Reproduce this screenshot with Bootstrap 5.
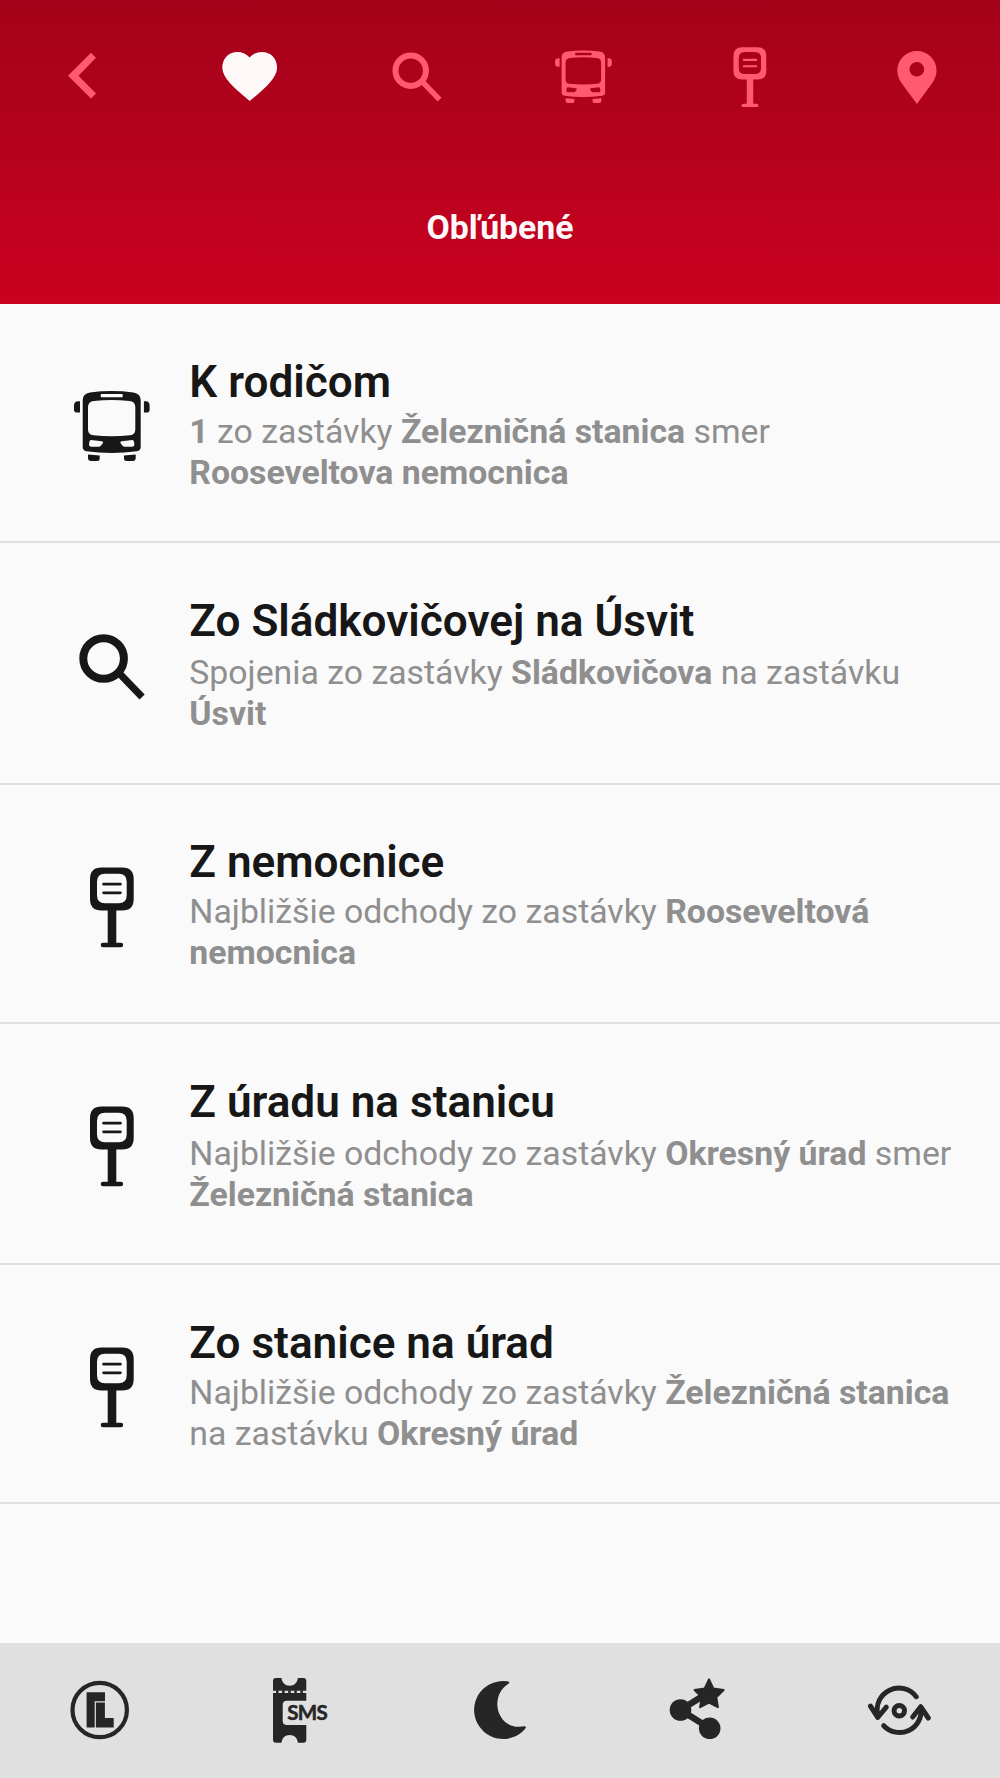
<!DOCTYPE html>
<html lang="sk">
<head>
<meta charset="utf-8">
<meta name="viewport" content="width=device-width, initial-scale=1">
<title>Obľúbené</title>
<link href="https://cdn.jsdelivr.net/npm/bootstrap@5.3.0/dist/css/bootstrap.min.css" rel="stylesheet">
<style>
body { font-family: Roboto, "Noto Sans", sans-serif; background: #fafafa; color: #171717; }
svg { display: block; fill: currentColor; }
.app-shell { height: 1778px; }
.app-top { height: 304px; background: linear-gradient(#a30219, #ca0121); color: #ff5a72; }
.top-tabs { height: 152px; }
.tab-icon { width: 72px; height: 72px; }
.tab-current { color: #fff8f9; }
.screen-title { height: 152px; padding-top: 52px; font-size: 33.8px; line-height: 48px; font-weight: 700; color: #fff8f9; }
.fav-row { height: 239.3px; border-bottom: 2px solid #e0e0e0; padding: 5px 40px 0 64.3px; gap: 29px; }
.fav-row:nth-child(even) { height: 241.3px; }
.fav-icon { width: 96px; height: 96px; flex: none; }
.fav-body { padding-bottom: 2px; white-space: nowrap; }
.fav-title { font-size: 44.1px; line-height: 52px; font-weight: 600; margin: 0 0 3px; }
.fav-row:nth-child(even) .fav-title { margin-bottom: 5px; }
.fav-text { font-size: 33.8px; line-height: 41px; color: #8f8f8f; margin: 0; }
.fav-text b { font-weight: 700; }
.app-bottom { height: 135px; padding-bottom: 1px; background: #e0e0e0; color: #262626; }
.sms-label { font: 700 20.5px Lato, sans-serif; }
</style>
<script src="https://cdn.jsdelivr.net/npm/bootstrap@5.3.0/dist/js/bootstrap.bundle.min.js"></script>
</head>
<body>
<svg width="0" height="0" class="d-none" aria-hidden="true">
  <symbol id="i-search" viewBox="0 0 96 96">
    <circle cx="39.6" cy="40.9" r="20.3" fill="none" stroke="currentColor" stroke-width="8"/>
    <path d="M54 54.4 78.1 79.4" fill="none" stroke="currentColor" stroke-width="7.2"/>
  </symbol>
  <symbol id="i-bus" viewBox="0 0 96 96">
    <path fill-rule="evenodd" d="M26 15.4Q47.7 12.6 69.4 15.4Q76.7 16.6 76.7 23V70Q76.7 73.6 73 74.2Q47.7 77.8 22.4 74.2Q18.7 73.6 18.7 70V23Q18.7 16.6 26 15.4Z
      M37.6 17Q36.7 17 36.7 18V19.4Q36.7 20.3 37.6 20.3H57.8Q58.7 20.3 58.7 19.4V18Q58.7 17 57.8 17Z
      M30 23.9Q47.7 22.3 65.4 23.9Q71.3 24.5 71.3 30V52.5Q71.3 57.6 66 58.3Q47.7 60.2 29.4 58.3Q24 57.6 24 52.5V30Q24 24.5 30 23.9Z
      M27.2 63.1 37.5 64.2Q39.9 64.7 38.6 66.4L37 68.6Q36.2 69.8 34.5 69.8H27Q24.8 69.6 25 67.5L25.4 64.8Q25.7 63 27.2 63.1Z
      M68.2 63.1 57.9 64.2Q55.5 64.7 56.8 66.4L58.4 68.6Q59.2 69.8 60.9 69.8H68.4Q70.6 69.6 70.4 67.5L70 64.8Q69.7 63 68.2 63.1Z"/>
    <path d="M16 24.2V35.6H13Q10 35.6 10 32.8V28.5Q10 24.4 14 24.2ZM79.9 24.2V35.6H82.7Q85.6 35.6 85.6 32.8V28.5Q85.6 24.4 82 24.2ZM24 77.5 35.7 78.6V81.5Q35.7 84 33 84H27Q24 84 24 81ZM71.7 77.5 60 78.6V81.5Q60 84 62.7 84H68.7Q71.7 84 71.7 81Z"/>
  </symbol>
  <symbol id="i-stop" viewBox="0 0 96 96">
    <path fill-rule="evenodd" d="M37.5 9.5H58.2Q69.7 9.5 69.7 21V41Q69.7 52.5 58.2 52.5H52.3V84.8H57A2.2 2.2 0 0 1 57 89.2H38.9A2.2 2.2 0 0 1 38.9 84.8H43.7V52.5H37.5Q26 52.5 26 41V21Q26 9.5 37.5 9.5ZM41 15.8Q33 15.8 33 23.8V37.2Q33 45.2 41 45.2H54.7Q62.7 45.2 62.7 37.2V23.8Q62.7 15.8 54.7 15.8Z"/>
    <path d="M39.6 26.2H56.4M39.6 34.8H56.4" stroke="currentColor" stroke-width="2.8" stroke-linecap="round"/>
  </symbol>
</svg>

<div class="app-shell d-flex flex-column">
  <header class="app-top">
    <nav class="top-tabs row g-0 align-items-center" aria-label="Hlavná navigácia">
      <div class="col-2 d-flex justify-content-center"><svg class="tab-icon" viewBox="0 0 72 72"><path d="M21 35.7 44 12.7 49 17.8 31.5 35.7 49 53.4 44 58.5Z"/></svg></div>
      <div class="col-2 d-flex justify-content-center tab-current"><svg class="tab-icon" viewBox="0 0 72 72"><path d="M35.7 17.6C39 14 43 12 48 12C57 12 63.1 18.5 63.1 28C62.6 38 52 47.5 35.7 61C19.4 47.5 8.8 38 8.3 28C8.3 18.5 14.4 12 23.4 12C28.4 12 32.4 14 35.7 17.6Z"/></svg></div>
      <div class="col-2 d-flex justify-content-center"><svg class="tab-icon"><use href="#i-search"/></svg></div>
      <div class="col-2 d-flex justify-content-center"><svg class="tab-icon"><use href="#i-bus" x="0.6"/></svg></div>
      <div class="col-2 d-flex justify-content-center"><svg class="tab-icon"><use href="#i-stop" y="0.2"/></svg></div>
      <div class="col-2 d-flex justify-content-center"><svg class="tab-icon" viewBox="0 0 72 72"><path fill-rule="evenodd" d="M16.3 30.6a19.6 19.6 0 0 1 39.2 0c0 5-1.8 9-4.2 12.5L35.9 64 20.5 43.1c-2.4-3.5-4.2-7.5-4.2-12.5zM35.8 22a7.3 7.3 0 1 0 .01 0z"/></svg></div>
    </nav>
    <h1 class="screen-title text-center m-0">Obľúbené</h1>
  </header>

  <main class="flex-grow-1">
    <div class="fav-row d-flex align-items-center">
      <svg class="fav-icon"><use href="#i-bus"/></svg>
      <div class="fav-body"><h2 class="fav-title">K rodičom</h2><p class="fav-text"><b>1</b> zo zastávky <b>Železničná stanica</b> smer<br><b>Rooseveltova nemocnica</b></p></div>
    </div>
    <div class="fav-row d-flex align-items-center">
      <svg class="fav-icon"><use href="#i-search" y="0.6"/></svg>
      <div class="fav-body"><h2 class="fav-title">Zo Sládkovičovej na Úsvit</h2><p class="fav-text">Spojenia zo zastávky <b>Sládkovičova</b> na zastávku<br><b>Úsvit</b></p></div>
    </div>
    <div class="fav-row d-flex align-items-center">
      <svg class="fav-icon"><use href="#i-stop"/></svg>
      <div class="fav-body"><h2 class="fav-title">Z nemocnice</h2><p class="fav-text">Najbližšie odchody zo zastávky <b>Rooseveltová<br>nemocnica</b></p></div>
    </div>
    <div class="fav-row d-flex align-items-center">
      <svg class="fav-icon"><use href="#i-stop" y="-1"/></svg>
      <div class="fav-body"><h2 class="fav-title">Z úradu na stanicu</h2><p class="fav-text">Najbližšie odchody zo zastávky <b>Okresný úrad</b> smer<br><b>Železničná stanica</b></p></div>
    </div>
    <div class="fav-row d-flex align-items-center">
      <svg class="fav-icon"><use href="#i-stop"/></svg>
      <div class="fav-body"><h2 class="fav-title">Zo stanice na úrad</h2><p class="fav-text">Najbližšie odchody zo zastávky <b>Železničná stanica</b><br>na zastávku <b>Okresný úrad</b></p></div>
    </div>
  </main>

  <footer class="app-bottom row g-0 align-items-center">
    <div class="col d-flex justify-content-center"><svg class="tab-icon" viewBox="0 0 72 72"><circle cx="35.7" cy="36" r="27.2" fill="none" stroke="currentColor" stroke-width="4.2"/><path d="M22.6 18.3H41V27.2H30.7V53.5H22.6ZM31.9 28.4H40.9V44H49.7V53.5H31.9Z"/></svg></div>
    <div class="col d-flex justify-content-center"><svg class="tab-icon" viewBox="0 0 72 72"><path d="M12 4H17.5C18 8.5 21 11.7 25.7 11.7S33.4 8.5 33.9 4H39.3Q42.3 4 42.3 7V16.7H9V7Q9 4 12 4ZM9 19H42.3V26.7H23Q18.7 26.7 18.7 31V46.7Q18.7 51 23 51H42.3V65.7Q42.3 68.7 39.3 68.7H33.9C33.4 64 30.4 61 25.7 61S18 64 17.5 68.7H12Q9 68.7 9 65.7Z"/><path d="M12 17.8H42" stroke="currentColor" stroke-width="3" stroke-dasharray="2.5 3.6"/><text x="23.3" y="46" textLength="40.5" stroke="currentColor" stroke-width="0.5" class="sms-label">SMS</text></svg></div>
    <div class="col d-flex justify-content-center"><svg class="tab-icon" viewBox="0 0 72 72"><path d="M43.5 7.3Q46.5 8 44.5 9.8C37.5 14 33.3 21.5 33.3 30.5C33.5 43 43 53.5 55.5 52.8L60.5 52.2Q63 52.5 61 55A29 29 0 1 1 43.5 7.3Z"/></svg></div>
    <div class="col d-flex justify-content-center"><svg class="tab-icon" viewBox="0 0 72 72"><circle cx="16.5" cy="36" r="10.8"/><circle cx="45.7" cy="54.3" r="10.8"/><path d="M42 20 16.5 36 45.7 54.3" fill="none" stroke="currentColor" stroke-width="6.5"/><path d="M45 5.3 49.3 14.5 59.6 16 52.3 23.2 53.9 33.2 45 28.5 36.1 33.2 37.7 23.2 30.6 16 40.7 14.5Z" stroke="currentColor" stroke-width="2" stroke-linejoin="round"/></svg></div>
    <div class="col d-flex justify-content-center"><svg class="tab-icon" viewBox="0 0 72 72"><g fill="none" stroke="currentColor" stroke-linecap="round" stroke-linejoin="round" stroke-width="5"><circle cx="35.3" cy="36.7" r="5.2"/><path d="M52.2 22.7A21.7 21.7 0 0 0 13.8 41M6.5 32.2 13.7 43.5 22.3 33.2M19.7 51.7A21.7 21.7 0 0 0 57 34M48.7 43 56.7 32.7 64.3 44"/></g></svg></div>
  </footer>
</div>
</body>
</html>
